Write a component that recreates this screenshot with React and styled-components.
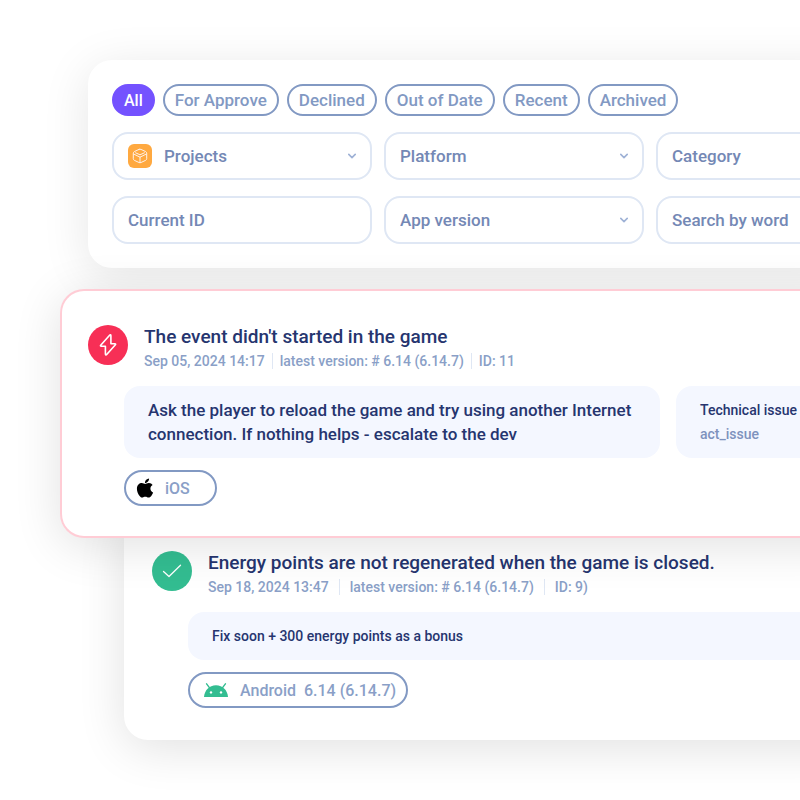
import { FaApple } from "react-icons/fa";
import styled, { createGlobalStyle } from "styled-components";

const GlobalStyle = createGlobalStyle`
  * {
    box-sizing: border-box;
  }

  body {
    margin: 0;
    background: #ffffff;
    font-family: Roboto, "Liberation Sans", sans-serif;
    font-weight: 500;
  }

  button,
  input,
  select {
    font: inherit;
  }
`;

const Page = styled.main`
  min-height: 100vh;
  padding: 60px 0;
  overflow: hidden;
`;

const Panel = styled.section`
  margin-right: -48px;
  margin-left: 88px;
  padding: 24px 0 24px 24px;
  border-radius: 24px 0 0 24px;
  background: #ffffff;
  box-shadow: 0 8px 48px rgba(0, 0, 0, 0.1);
`;

const Tabs = styled.div`
  display: flex;
  gap: 8px;
  margin-bottom: 16px;
`;

const Tab = styled.button`
  height: 32px;
  padding: 0 10px;
  border: 2px solid ${(props) => (props.$active ? "#7452ff" : "#8299c3")};
  border-radius: 16px;
  background: ${(props) => (props.$active ? "#7452ff" : "#ffffff")};
  color: ${(props) => (props.$active ? "#ffffff" : "#8299c3")};
  font-size: ${(props) => (props.$active ? "16px" : "17px")};
  white-space: nowrap;
  cursor: pointer;
`;

const Filters = styled.div`
  display: grid;
  grid-template-columns: repeat(3, minmax(260px, 1fr));
  gap: 16px 12px;
`;

const Field = styled.label`
  display: flex;
  align-items: center;
  gap: 12px;
  height: 48px;
  padding: 0 14px;
  border: 2px solid #dfe7f4;
  border-radius: 16px;
  color: #7488b5;
`;

const Select = styled.select`
  flex: 1;
  min-width: 0;
  padding: 0;
  border: 0;
  outline: 0;
  appearance: none;
  background: transparent;
  color: inherit;
  font-size: 17px;
`;

const Input = styled.input`
  flex: 1;
  min-width: 0;
  padding: 0;
  border: 0;
  outline: 0;
  background: transparent;
  color: inherit;
  font-size: 17px;

  &::placeholder {
    color: inherit;
    opacity: 1;
  }
`;

const ProjectIcon = styled.span`
  display: flex;
  align-items: center;
  justify-content: center;
  width: 24px;
  height: 24px;
  border-radius: 6px;
  background: #ffa940;
`;

const Card = styled.article`
  position: relative;
  z-index: ${(props) => (props.$raised ? 1 : 0)};
  margin-top: ${(props) => (props.$raised ? "21px" : "-24px")};
  margin-right: -48px;
  margin-left: ${(props) => (props.$raised ? "60px" : "124px")};
  padding: ${(props) => (props.$raised ? "34px 0 30px 26px" : "37px 0 32px 28px")};
  border: ${(props) => (props.$raised ? "2px solid #ffccd5" : "0")};
  border-right: 0;
  border-radius: 24px 0 0 24px;
  background: #ffffff;
  box-shadow: 0 8px 48px rgba(0, 0, 0, 0.12);
`;

const CardHeader = styled.header`
  display: flex;
  gap: 16px;
  margin-bottom: 13px;
`;

const Status = styled.span`
  display: flex;
  align-items: center;
  justify-content: center;
  width: 40px;
  height: 40px;
  border-radius: 50%;
  background: ${(props) => props.$color};
`;

const Title = styled.h2`
  margin: 0;
  color: #26356f;
  font-size: 19px;
  font-weight: 500;
  line-height: 24px;
  white-space: nowrap;
`;

const Meta = styled.div`
  display: flex;
  align-items: center;
  gap: ${(props) => (props.$wide ? "10px" : "7px")};
  color: #8a9fc7;
  font-size: 14px;
  line-height: 24px;
  white-space: nowrap;
`;

const Divider = styled.span`
  width: 1px;
  height: 16px;
  background: #dfe7f4;
`;

const CardBody = styled.div`
  padding-left: 36px;
`;

const Notes = styled.div`
  display: grid;
  grid-template-columns: ${(props) => (props.$split ? "536px minmax(200px, 1fr)" : "1fr")};
  gap: 16px;
  margin-bottom: 12px;
`;

const Note = styled.div`
  padding: 12px 24px;
  border-radius: ${(props) => (props.$bleed ? "16px 0 0 16px" : "16px")};
  background: #f4f7ff;
  color: #26356f;
  font-size: ${(props) => (props.$large ? "17px" : "14px")};
  line-height: 24px;

  p {
    margin: 0;
  }
`;

const Code = styled.p`
  color: #7e92bd;
`;

const Platform = styled.button`
  display: inline-flex;
  align-items: center;
  gap: ${(props) => props.$gap};
  height: 36px;
  padding: ${(props) => props.$padding};
  border: 2px solid #8299c3;
  border-radius: 18px;
  background: #ffffff;
  color: #8a9fc7;
  font-size: 16px;
  white-space: pre;
  cursor: pointer;
`;

function Chevron() {
  return (
    <svg width="8" height="6" viewBox="0 0 8 6" fill="none" stroke="#9fb2d6" strokeWidth="1.6" strokeLinecap="round" strokeLinejoin="round">
      <path d="M.8 1.4 4 4.6 7.200 1.4" />
    </svg>
  );
}

function CubeIcon() {
  return (
    <svg width="16" height="16" viewBox="0 0 16 16" fill="none" stroke="#fff2ea" strokeLinecap="round" strokeLinejoin="round">
      <path d="M7 1.400 2.300 3.600Q1.300 4.200 1.300 5.300V10.700Q1.300 11.800 2.300 12.300L7 14.500Q8 15 9 14.500L13.700 12.300Q14.700 11.800 14.700 10.700V5.300Q14.700 4.200 13.700 3.600L9 1.400Q8 1 7 1.400Z" />
      <path d="M1.600 6 8 9.200 14.400 6M8 9.200V14.600M3.600 4.800 8 6.800 12.400 4.800" />
    </svg>
  );
}

function BoltIcon() {
  return (
    <svg width="20" height="24" viewBox="0 0 20 24" fill="none" stroke="#ffffff" strokeWidth="1.6" strokeLinecap="round" strokeLinejoin="round">
      <path d="M11.6 2.2 2.7 12.2c-.5.6-.2 1.1.5 1.1h4.2v7.8c0 1 .7 1.2 1.3.5l8.7-9.8c.5-.6.2-1.1-.5-1.1h-4V2.7c0-1-.7-1.2-1.3-.5Z" />
    </svg>
  );
}

function CheckIcon() {
  return (
    <svg width="20" height="14" viewBox="0 0 20 14" fill="none" stroke="#ffffff" strokeWidth="1.3" strokeLinecap="round" strokeLinejoin="round">
      <path d="M1.5 7.5 7 12.5 18.5 1.2" />
    </svg>
  );
}

function AndroidIcon() {
  return (
    <svg width="24" height="14" viewBox="0 0 24 14">
      <path d="M2.6.8 5.4 4.6M21.4.8 18.6 4.6" stroke="#33bd91" strokeWidth="1.4" strokeLinecap="round" />
      <path d="M0 14C.5 7.3 5.2 2.2 12 2.2S23.5 7.3 24 14Z" fill="#33bd91" />
      <circle cx="7" cy="9.4" r="1.2" fill="#ffffff" />
      <circle cx="17" cy="9.4" r="1.2" fill="#ffffff" />
    </svg>
  );
}

const tabs = ["All", "For Approve", "Declined", "Out of Date", "Recent", "Archived"];

function SelectField({ name, icon }) {
  return (
    <Field>
      {icon}
      <Select aria-label={name}>
        <option>{name}</option>
      </Select>
      <Chevron />
    </Field>
  );
}

function TextField({ name }) {
  return (
    <Field>
      <Input type="text" aria-label={name} placeholder={name} />
    </Field>
  );
}

function IssueHeader({ title, color, icon, date, version, id, wide }) {
  return (
    <CardHeader>
      <Status $color={color}>{icon}</Status>
      <div>
        <Title>{title}</Title>
        <Meta $wide={wide}>
          <span>{date}</span>
          <Divider />
          <span>latest version: # {version}</span>
          <Divider />
          <span>ID: {id}</span>
        </Meta>
      </div>
    </CardHeader>
  );
}

export default function App() {
  return (
    <Page>
      <GlobalStyle />
      <Panel>
        <Tabs>
          {tabs.map((tab) => (
            <Tab key={tab} $active={tab === "All"}>
              {tab}
            </Tab>
          ))}
        </Tabs>
        <Filters>
          <SelectField
            name="Projects"
            icon={
              <ProjectIcon>
                <CubeIcon />
              </ProjectIcon>
            }
          />
          <SelectField name="Platform" />
          <SelectField name="Category" />
          <TextField name="Current ID" />
          <SelectField name="App version" />
          <TextField name="Search by word" />
        </Filters>
      </Panel>

      <Card $raised>
        <IssueHeader
          title="The event didn't started in the game"
          color="#f72f56"
          icon={<BoltIcon />}
          date="Sep 05, 2024 14:17"
          version="6.14 (6.14.7)"
          id="11"
        />
        <CardBody>
          <Notes $split>
            <Note $large>
              <p>
                Ask the player to reload the game and try using another Internet connection. If nothing helps - escalate
                to the dev
              </p>
            </Note>
            <Note>
              <p>Technical issue</p>
              <Code>act_issue</Code>
            </Note>
          </Notes>
          <Platform $gap="9px" $padding="0 25px 0 8px">
            <FaApple size={22} color="#000000" />
            iOS
          </Platform>
        </CardBody>
      </Card>

      <Card>
        <IssueHeader
          title="Energy points are not regenerated when the game is closed."
          color="#33bd91"
          icon={<CheckIcon />}
          date="Sep 18, 2024 13:47"
          version="6.14 (6.14.7)"
          id="9)"
          wide
        />
        <CardBody>
          <Notes>
            <Note $bleed>
              <p>Fix soon + 300 energy points as a bonus</p>
            </Note>
          </Notes>
          <Platform $gap="12px" $padding="0 10px 0 14px">
            <AndroidIcon />
            {"Android  6.14 (6.14.7)"}
          </Platform>
        </CardBody>
      </Card>
    </Page>
  );
}
